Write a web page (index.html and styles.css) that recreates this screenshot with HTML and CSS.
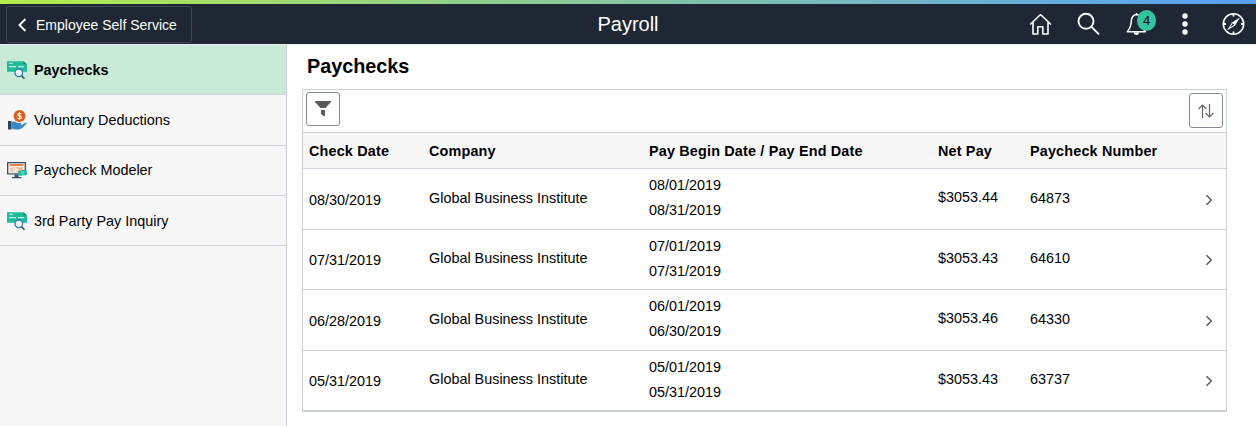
FILE: index.html
```
<!DOCTYPE html>
<html lang="en">
<head>
    <meta charset="UTF-8">
    <meta name="viewport" content="width=device-width, initial-scale=1.0">
    <title>Payroll</title>
    <link rel="stylesheet" href="styles.css">
</head>
<body>
    <svg class="defs" width="0" height="0">
        <symbol id="check" viewBox="0 0 21 20">
            <path d="M0 1.300h16.500l3.500 3v7.400H0z" fill="#1fbc9c"/>
            <path d="M16.500 1.300l3.500 3h-3.500z" fill="#10806c"/>
            <path d="M2 3.300h4M2 6.600h7M11 6.600h6" stroke="#c5f0e5" stroke-width="1.100"/>
            <circle cx="11.800" cy="12.800" r="3.800" fill="#eef7fc" stroke="#3178b4" stroke-width="1.300"/>
            <path d="M14.600 15.800l2.900 2.900" stroke="#34495e" stroke-width="1.600"/>
        </symbol>
        <symbol id="chevron" viewBox="0 0 8 12">
            <path d="M1.500 1.200L6.300 6l-4.800 4.800" fill="none" stroke="#555" stroke-width="1.400"/>
        </symbol>
    </svg>

    <div class="rainbow"></div>
    <header class="topbar">
        <button class="back">
            <svg width="9" height="14" viewBox="0 0 9 14"><path d="M7.500 1L1.500 7l6 6" fill="none" stroke="#fff" stroke-width="1.900"/></svg>
            <span>Employee Self Service</span>
        </button>
        <h1>Payroll</h1>
        <div class="tools">
            <svg width="24" height="24" viewBox="0 0 24 24" fill="none" stroke="#fff" stroke-width="1.600" stroke-linejoin="round"><path d="M1.200 12.500L11.500 2.500l10.500 10M4 10.500V22h4.800v-7.300h5V22H19V10.500"/></svg>
            <svg width="24" height="24" viewBox="0 0 24 24" fill="none" stroke="#fff" stroke-width="1.900"><circle cx="9" cy="9.300" r="7.500"/><path d="M14.500 14.800l7.500 7.500"/></svg>
            <div class="bell">
                <svg width="24" height="24" viewBox="0 0 24 24" fill="none" stroke="#fff" stroke-width="1.500" stroke-linejoin="round"><path d="M11.500 2.500C8 3 6.500 5 6.300 9c-.2 5-1.300 7.500-4 10.700h18C17.500 16.500 16.800 14 16.600 9 16.400 5 15 3 11.500 2.500z"/><path d="M9.300 20.500c.5 2.200 3.700 2.200 4.200 0" fill="#fff"/><path d="M11.500 2.500V1"/></svg>
                <span class="badge">4</span>
            </div>
            <svg width="24" height="24" viewBox="0 0 24 24" fill="#fff"><circle cx="12" cy="4" r="2.700"/><circle cx="12" cy="12" r="2.700"/><circle cx="12" cy="20" r="2.700"/></svg>
            <svg width="24" height="24" viewBox="0 0 24 24" fill="none" stroke="#fff" stroke-width="1.600"><circle cx="12.500" cy="12" r="10.200"/><path d="M12.500 2v2.500M12.500 19.500V22M2.500 12H5M20 12h2.500" stroke-width="1.800"/><path d="M19 5.500l-5 8-8 5 5-8z" fill="#fff" stroke="none"/><path d="M11.700 11.300l1.500 1.500-4.200 2.800z" fill="#1e2733" stroke="none"/></svg>
        </div>
    </header>

    <div class="page">
        <nav class="sidebar">
            <a class="item active"><svg width="21" height="20"><use href="#check"/></svg>Paychecks</a>
            <a class="item">
                <svg width="21" height="20" viewBox="0 0 21 20">
                    <circle cx="12.500" cy="6" r="6" fill="#d9601d"/>
                    <path d="M14.400 4.300c-.5-1.100-3.700-1.200-3.700.3 0 1.800 3.800.9 3.800 2.800 0 1.600-3.200 1.600-4 .3M12.500 2v8" fill="none" stroke="#fff" stroke-width="1.100"/>
                    <path d="M1 11h3.500v8.500H1z" fill="#2d4257"/>
                    <path d="M4.500 12c3-1.200 4.500-.2 6 1h3c1 0 1 1.500 0 1.700h1.500l3.500-2c1.300-.5 1.500.6.700 1.300-3 3.200-5 5.500-7.500 5.500H8l-3.500-1z" fill="#3b87c2"/>
                </svg>Voluntary Deductions</a>
            <a class="item">
                <svg width="21" height="20" viewBox="0 0 21 20">
                    <path d="M0 2h19v12.500H0z" fill="#3d5166"/>
                    <path d="M1.300 3.300h16.400v10H1.300z" fill="#f7eee8"/>
                    <path d="M2.500 4.200h14v1.600h-14z" fill="#dc6a30"/>
                    <path d="M3 7.200h3.500v5H3z" fill="#f1cdb9"/>
                    <path d="M7 7.200h9v5H7z" fill="#eeb899"/>
                    <path d="M7.500 7.200l4.500 2.800-4.500 2.200z" fill="#fff"/>
                    <path d="M7.500 14.500h4v2.500h3v1.300H5V17h2.500z" fill="#3d5166"/>
                    <path d="M11 11l8.500-1.500.5 5.500-8.500 1z" fill="#1fbc9c"/>
                    <circle cx="15.500" cy="12.900" r="1.200" fill="none" stroke="#8de2cf" stroke-width=".8"/>
                </svg>Paycheck Modeler</a>
            <a class="item"><svg width="21" height="20"><use href="#check"/></svg>3rd Party Pay Inquiry</a>
        </nav>

        <main>
            <h2>Paychecks</h2>
            <section class="panel">
                <div class="toolbar">
                    <button class="tool"><svg width="16" height="16" viewBox="0 0 16 16" fill="#5a5a5a"><path d="M0 0h16v1l-5.500 6h-5L0 1z"/><path d="M6 9h4v6H8.500L6 13z"/></svg></button>
                    <button class="tool sort"><svg width="16" height="14" viewBox="0 0 16 14" fill="none" stroke="#666" stroke-width="1.200"><path d="M4.500 14V1M.5 5l4-4 4 4M11.500 0v13M7.500 9l4 4 4-4"/></svg></button>
                </div>
                <div class="row head">
                    <span>Check Date</span>
                    <span>Company</span>
                    <span>Pay Begin Date / Pay End Date</span>
                    <span>Net Pay</span>
                    <span>Paycheck Number</span>
                </div>
                <div class="row">
                    <span class="date">08/30/2019</span>
                    <span>Global Business Institute</span>
                    <span class="period">08/01/2019<br>08/31/2019</span>
                    <span class="net">$3053.44</span>
                    <span>64873</span>
                    <svg class="go" width="8" height="12"><use href="#chevron"/></svg>
                </div>
                <div class="row">
                    <span class="date">07/31/2019</span>
                    <span>Global Business Institute</span>
                    <span class="period">07/01/2019<br>07/31/2019</span>
                    <span class="net">$3053.43</span>
                    <span>64610</span>
                    <svg class="go" width="8" height="12"><use href="#chevron"/></svg>
                </div>
                <div class="row">
                    <span class="date">06/28/2019</span>
                    <span>Global Business Institute</span>
                    <span class="period">06/01/2019<br>06/30/2019</span>
                    <span class="net">$3053.46</span>
                    <span>64330</span>
                    <svg class="go" width="8" height="12"><use href="#chevron"/></svg>
                </div>
                <div class="row">
                    <span class="date">05/31/2019</span>
                    <span>Global Business Institute</span>
                    <span class="period">05/01/2019<br>05/31/2019</span>
                    <span class="net">$3053.43</span>
                    <span>63737</span>
                    <svg class="go" width="8" height="12"><use href="#chevron"/></svg>
                </div>
            </section>
        </main>
    </div>
</body>
</html>
```
FILE: styles.css
```
* {
    box-sizing: border-box;
}
body {
    margin: 0;
    height: 426px;
    display: flex;
    flex-direction: column;
    overflow: hidden;
    font-family: "Liberation Sans", Arial, sans-serif;
    font-size: 14.4px;
    color: #000;
    background-color: #fff;
}
.defs {
    display: none;
}
button {
    font-family: inherit;
    padding: 0;
}
.rainbow {
    height: 4px;
    background: linear-gradient(to right, #b5ec4b, #55a0f8);
}
.topbar {
    height: 40px;
    display: grid;
    grid-template-columns: 1fr auto 1fr;
    align-items: center;
    background-color: #1e2733;
    color: #fff;
}
.topbar h1 {
    margin: 0;
    font-size: 20px;
    font-weight: normal;
}
.back {
    width: 186px;
    height: 37px;
    margin-left: 6px;
    margin-top: 1px;
    padding-left: 11px;
    display: flex;
    align-items: center;
    gap: 9px;
    border: 1px solid #3e4854;
    border-radius: 3px;
    background: none;
    color: #fff;
    font-size: 14px;
}
.tools {
    display: flex;
    justify-content: flex-end;
    gap: 24px;
    padding-right: 11px;
}
.bell {
    position: relative;
    height: 24px;
}
.badge {
    position: absolute;
    left: 12px;
    top: -2px;
    width: 19px;
    height: 21px;
    border-radius: 50%;
    background-color: #35c2a0;
    color: #000;
    font-size: 13px;
    line-height: 22px;
    text-align: center;
}
.page {
    flex: 1;
    display: flex;
    border-top: 1px solid #e8ebee;
}
/* left menu */
.sidebar {
    width: 287px;
    background-color: #f7f7f7;
    border-right: 1px solid #c9ced4;
}
.item {
    height: 50.3px;
    padding-left: 7px;
    display: flex;
    align-items: center;
    gap: 6px;
    border-bottom: 1px solid #d0d4d9;
}
.item.active {
    background-color: #c8ead7;
    font-weight: bold;
}
/* content */
main {
    flex: 1;
    padding: 0 29px 0 15px;
}
h2 {
    margin: 0;
    padding-left: 5px;
    height: 44px;
    font-size: 19.8px;
    line-height: 42px;
}
.panel {
    border: 1px solid #ccd1d8;
    border-bottom-width: 2px;
}
.toolbar {
    height: 42px;
    padding: 2px 3px;
    display: flex;
    justify-content: space-between;
}
.tool {
    width: 34px;
    height: 34px;
    display: flex;
    align-items: center;
    justify-content: center;
    border: 1px solid #848b95;
    border-radius: 3px;
    background-color: #fff;
}
.sort {
    height: 35px;
    margin-top: 1px;
}
.row {
    height: 60.5px;
    padding: 20.5px 13px 0 6px;
    display: grid;
    grid-template-columns: 120px 220px 289px 92px 1fr auto;
    align-items: start;
    border-top: 1px solid #ccd1d8;
    line-height: 17px;
}
.row.head {
    height: 36px;
    padding-top: 10px;
    background-color: #f7f7f7;
    font-weight: bold;
    letter-spacing: 0.17px;
}
.date {
    padding-top: 2px;
}
.period {
    margin-top: -16.5px;
    line-height: 25px;
}
.net {
    margin-top: -0.5px;
}
.go {
    margin-top: 4px;
}
```
